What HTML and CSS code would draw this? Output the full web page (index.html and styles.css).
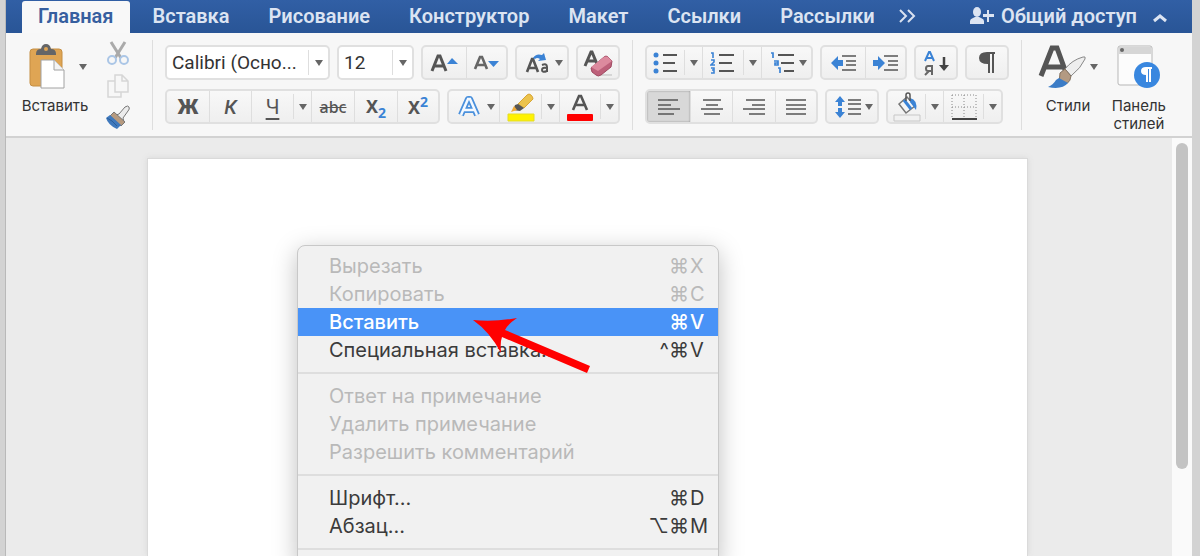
FILE: index.html
```html
<!DOCTYPE html>
<html lang="ru">
<head>
<meta charset="utf-8">
<title>Документ</title>
<link rel="stylesheet" href="styles.css">
</head>
<body>
<svg class="defs" aria-hidden="true">
  <symbol id="caret" viewBox="0 0 8 8"><path d="M0 1h8L4 7z" fill="#666"/></symbol>
</svg>
<div class="window">
  <nav class="tabs">
    <button class="tab active">Главная</button>
    <button class="tab">Вставка</button>
    <button class="tab">Рисование</button>
    <button class="tab">Конструктор</button>
    <button class="tab">Макет</button>
    <button class="tab">Ссылки</button>
    <button class="tab">Рассылки</button>
    <button class="more" aria-label="Ещё"><svg width="18" height="14" viewBox="0 0 18 14"><path d="M2 1l6 6-6 6M10 1l6 6-6 6" fill="none" stroke="#d9e1f0" stroke-width="2"/></svg></button>
    <button class="share"><svg width="26" height="20" viewBox="0 0 26 20" fill="#dce4f2"><ellipse cx="8" cy="6" rx="4" ry="5"/><path d="M1 18v-3q0-2 3-3l2-1h4l2 1q3 1 3 3v3zM18 4h2v4h5v3h-5v5h-2v-5h-4V8h4z"/></svg>Общий доступ</button>
    <button class="collapse" aria-label="Свернуть"><svg width="16" height="10" viewBox="0 0 16 10"><path d="M2 8l6-5 6 5" fill="none" stroke="#dce4f2" stroke-width="3"/></svg></button>
  </nav>

  <div class="ribbon">
    <section class="clipboard">
      <button class="big paste">
        <span class="art">
          <svg width="36" height="46" viewBox="0 0 36 46"><rect x="1" y="5" width="32" height="37" rx="3" fill="#dfa554" stroke="#c58e43"/><path d="M7 10q0-5 5-5 1-5 5-5t5 5q5 0 5 5v1H7z" fill="#646567"/><circle cx="17" cy="5" r="2" fill="#dfa554"/><path d="M12 16h13l10 10v18H12z" fill="#fff" stroke="#a2a2a2"/><path d="M25 16v10h10" fill="#f4f4f4" stroke="#a2a2a2"/></svg>
          <svg width="8" height="8"><use href="#caret"/></svg>
        </span>
        <span>Вставить</span>
      </button>
      <div class="clip-tools">
        <button aria-label="Вырезать"><svg width="24" height="26" viewBox="0 0 24 26" fill="none"><path d="M5 1l10 16M19 1L9 17" stroke="#aaa" stroke-width="3"/><circle cx="6" cy="19" r="4" stroke="#abc6e6" stroke-width="2"/><circle cx="18" cy="19" r="4" stroke="#abc6e6" stroke-width="2"/></svg></button>
        <button aria-label="Копировать"><svg width="24" height="26" viewBox="0 0 24 26" fill="#f7f7f7" stroke="#d6d6d6" stroke-width="1.5"><path d="M2 8h8l5 5v11H2z"/><path d="M9 2h7l6 6v11H9zM16 2v6h6"/></svg></button>
        <button aria-label="Формат по образцу"><svg width="26" height="26" viewBox="0 0 26 26"><path d="M14 10l6-7q3-2 4 0t-1 4l-5 7 1 4-8-7z" fill="#ececec" stroke="#777"/><path d="M9 8l11 10-4 4L5 12z" fill="#b69a7f" stroke="#777"/><path d="M5 11l11 10-4 4Q3 21 1 14z" fill="#3f79bd"/><path d="M2 14q5 2 10 8" fill="none" stroke="#2b5d99"/></svg></button>
      </div>
    </section>

    <section class="group">
      <div class="row">
        <div class="combo font-name"><select aria-label="Шрифт"><option>Calibri (Осно...</option></select><span class="drop"><svg width="8" height="8"><use href="#caret"/></svg></span></div>
        <div class="combo font-size"><select aria-label="Размер"><option>12</option></select><span class="drop"><svg width="8" height="8"><use href="#caret"/></svg></span></div>
        <div class="set">
          <button class="w43" aria-label="Увеличить шрифт"><svg width="32" height="24" viewBox="0 0 32 24"><path d="M3 20L9 5h2l6 15M5 15h10" fill="none" stroke="#555" stroke-width="3"/><path d="M18 13l5-6 6 6z" fill="#3b83d5"/></svg></button>
          <button class="w40" aria-label="Уменьшить шрифт"><svg width="32" height="24" viewBox="0 0 32 24"><path d="M4 18L9 6h2l5 12M6 14h8" fill="none" stroke="#666" stroke-width="2.6"/><path d="M17 10h11l-5.500 6z" fill="#3b83d5"/></svg></button>
        </div>
        <div class="set">
          <button class="w50 spread" aria-label="Регистр"><svg width="28" height="26" viewBox="0 0 28 26"><path d="M3 22L8 9h1l5 13M5 18h7" fill="none" stroke="#555" stroke-width="2.6"/><path d="M18 15q5-2 5 2v5M23 18q-5-1-5 2t5 1" fill="none" stroke="#555" stroke-width="2"/><path d="M9 8q3-5 9-3l2-2 2 7-8 1 2-2q-3-2-5 0z" fill="#3b83d5"/></svg><svg width="8" height="8"><use href="#caret"/></svg></button>
        </div>
        <div class="set">
          <button class="w40" aria-label="Очистить форматирование"><svg width="32" height="30" viewBox="0 0 32 30"><path d="M3 18L9 4h1l5 12M5 13h9" fill="none" stroke="#555" stroke-width="3"/><path d="M19 27h11" stroke="#bbb"/><path d="M9 20L22 9q2-2 4 0l4 4-1 6-10 8q-3 2-5 0l-4-3z" fill="#bd607a" stroke="#9f4860"/><path d="M9 19L22 9q2-1 4 0l4 4-14 10z" fill="#dc8a9e"/></svg></button>
        </div>
      </div>
      <div class="row">
        <div class="set letters">
          <button class="w42"><b>Ж</b></button>
          <button class="w42"><i>К</i></button>
          <button class="w42 part"><u>Ч</u></button>
          <button class="w18" aria-label="Подчёркивание"><svg width="8" height="8"><use href="#caret"/></svg></button>
          <button class="w43"><s>abc</s></button>
          <button class="w43 script"><span>X<sub>2</sub></span></button>
          <button class="w41 script"><span>X<sup>2</sup></span></button>
        </div>
        <div class="set">
          <button class="w50 spread" aria-label="Текстовые эффекты"><svg width="26" height="26" viewBox="0 0 26 26"><path d="M5 21L12 5h2l7 16M8 16h10" fill="none" stroke="#4a90dc" stroke-width="6" stroke-linejoin="round"/><path d="M5 21L12 5h2l7 16M8 16h10" fill="none" stroke="#f4f9ff" stroke-width="2.500"/></svg><svg width="8" height="8"><use href="#caret"/></svg></button>
          <button class="w42 part" aria-label="Цвет выделения"><svg width="28" height="30" viewBox="0 0 28 30"><path d="M11 12l9-9q2-2 4 0t2 4l-9 9z" fill="#ecc34c" stroke="#d7a535"/><path d="M11 12l6 4-4 3-7-1 2-5z" fill="#555"/><path d="M7 14l3 4-6 2z" fill="#efaa39"/><path d="M1 22h26v7H1z" fill="#fff200" stroke="#e3dc28"/></svg></button>
          <button class="w18" aria-label="Выбрать цвет выделения"><svg width="8" height="8"><use href="#caret"/></svg></button>
          <button class="w41 part" aria-label="Цвет текста"><svg width="28" height="30" viewBox="0 0 28 30"><path d="M7 18L13 4h2l6 14M9 13h10" fill="none" stroke="#555" stroke-width="2.6"/><rect x="1" y="22" width="26" height="7" rx="1" fill="#f00"/></svg></button>
          <button class="w18" aria-label="Выбрать цвет текста"><svg width="8" height="8"><use href="#caret"/></svg></button>
        </div>
      </div>
    </section>

    <section class="group">
      <div class="row">
        <div class="set">
          <button class="w37 part" aria-label="Маркеры"><svg width="26" height="22" viewBox="0 0 26 22"><g fill="#3b83d5"><circle cx="3" cy="3" r="2.500"/><circle cx="3" cy="11" r="2.500"/><circle cx="3" cy="19" r="2.500"/></g><path d="M10 3h14M10 11h12M10 19h14" stroke="#555" stroke-width="2"/></svg></button>
          <button class="w18" aria-label="Вид маркеров"><svg width="8" height="8"><use href="#caret"/></svg></button>
          <button class="w41 part" aria-label="Нумерация"><svg width="26" height="24" viewBox="0 0 26 24"><path d="M1 2h2v5M1 9h3v2L1 14h4M1 17h3v5H1M2 19h2" fill="none" stroke="#3b83d5" stroke-width="1.600"/><path d="M9 4h15M9 12h13M9 20h15" stroke="#555" stroke-width="2"/></svg></button>
          <button class="w18" aria-label="Вид нумерации"><svg width="8" height="8"><use href="#caret"/></svg></button>
          <button class="w50 spread" aria-label="Многоуровневый список"><svg width="26" height="24" viewBox="0 0 26 24"><path d="M2 2h2v5M5 10h4v4H6v-2h3M9 17h2v5" fill="none" stroke="#3b83d5" stroke-width="1.700"/><path d="M9 4h16M12 12h13M15 20h10" stroke="#555" stroke-width="2"/></svg><svg width="8" height="8"><use href="#caret"/></svg></button>
        </div>
        <div class="set">
          <button class="w43" aria-label="Уменьшить отступ"><svg width="28" height="18" viewBox="0 0 28 18"><path d="M1 9l7-7v4h5v6H8v4z" fill="#3b83d5"/><path d="M12 2h14M16 7h10M16 11h10M12 16h14" stroke="#555" stroke-width="1.600"/></svg></button>
          <button class="w40" aria-label="Увеличить отступ"><svg width="28" height="18" viewBox="0 0 28 18"><path d="M13 9L6 2v4H1v6h5v4z" fill="#3b83d5"/><path d="M12 2h14M16 7h10M16 11h10M12 16h14" stroke="#555" stroke-width="1.600"/></svg></button>
        </div>
        <div class="set">
          <button class="w40" aria-label="Сортировка"><svg width="26" height="26" viewBox="0 0 26 26" fill="none"><path d="M2 11L6 2h1l4 9M4 8h5" stroke="#3b83d5" stroke-width="2"/><path d="M9 25V16H5q-2 0-2 2.500T5 21h4M6 21l-4 4" stroke="#666" stroke-width="2"/><path d="M21 7v11" stroke="#444" stroke-width="2.500"/><path d="M16 15h10l-5 6z" fill="#444"/></svg></button>
        </div>
        <div class="set">
          <button class="w40" aria-label="Непечатаемые знаки"><svg width="18" height="22" viewBox="0 0 18 22" fill="#555"><path d="M17 0v2h-1v19h-2V2h-2v19h-2V12Q1 12 1 6t8-6z"/></svg></button>
        </div>
      </div>
      <div class="row">
        <div class="set">
          <button class="w43 pressed" aria-label="По левому краю"><svg width="24" height="18" viewBox="0 0 24 18"><path d="M1 2h20M1 7h13M1 11h22M1 16h16" stroke="#555" stroke-width="1.600"/></svg></button>
          <button class="w42" aria-label="По центру"><svg width="24" height="18" viewBox="0 0 24 18"><path d="M3 2h18M6 7h12M1 11h22M4 16h16" stroke="#555" stroke-width="1.600"/></svg></button>
          <button class="w43" aria-label="По правому краю"><svg width="24" height="18" viewBox="0 0 24 18"><path d="M4 2h19M10 7h13M1 11h22M7 16h16" stroke="#555" stroke-width="1.600"/></svg></button>
          <button class="w41" aria-label="По ширине"><svg width="24" height="18" viewBox="0 0 24 18"><path d="M2 2h20M2 7h20M2 11h20M2 16h20" stroke="#555" stroke-width="1.600"/></svg></button>
        </div>
        <div class="set">
          <button class="w50 spread" aria-label="Интервал"><svg width="28" height="22" viewBox="0 0 28 22"><path d="M6 0l5 6H8v4H4V6H1zM6 22l5-6H8v-4H4v4H1z" fill="#3b83d5"/><path d="M14 4h13M14 8h13M14 13h13M14 18h13" stroke="#555" stroke-width="1.600"/></svg><svg width="8" height="8"><use href="#caret"/></svg></button>
        </div>
        <div class="set">
          <button class="w37 part" aria-label="Заливка"><svg width="28" height="30" viewBox="0 0 28 30"><path d="M6 12l8-7 8 9-9 7z" fill="#f6f6f6" stroke="#777" stroke-width="1.500"/><path d="M11 8l7 9" stroke="#3b83d5" stroke-width="3"/><path d="M17 6q8 2 6 12l-3-4-3-4z" fill="#3b83d5"/><path d="M13 9V3q0-2 2-2t2 2v6" fill="none" stroke="#555" stroke-width="1.500"/><path d="M1 23h26v6H1z" fill="#f1f1f1" stroke="#c7c7c7"/></svg></button>
          <button class="w18" aria-label="Цвет заливки"><svg width="8" height="8"><use href="#caret"/></svg></button>
          <button class="w40 part" aria-label="Границы"><svg width="26" height="28" viewBox="0 0 26 28"><path d="M1 2h24M1 14h24M1 2v23M13 2v23M25 2v23" fill="none" stroke="#888" stroke-dasharray="1 2"/><path d="M1 26h25" stroke="#444" stroke-width="2"/></svg></button>
          <button class="w18" aria-label="Вид границ"><svg width="8" height="8"><use href="#caret"/></svg></button>
        </div>
      </div>
    </section>

    <section class="styles">
      <button class="big">
        <span class="art">
          <svg width="48" height="44" viewBox="0 0 48 44"><path d="M3 31L14 3h5l8 22M8 22h16" fill="none" stroke="#555" stroke-width="5"/><path d="M27 24Q34 15 45 12q3-1 2 2-4 9-14 17z" fill="#eee" stroke="#888"/><path d="M27 24l6 7q-1 10-12 8l1-11z" fill="#b39a82" stroke="#82715f"/><path d="M21 33l9 5q-6 7-20 4 5-2 8-7z" fill="#3c7cc6"/></svg>
          <svg width="8" height="8"><use href="#caret"/></svg>
        </span>
        <span>Стили</span>
      </button>
      <button class="big">
        <span class="art">
          <svg width="44" height="44" viewBox="0 0 44 44"><rect x="1" y="1" width="34" height="39" rx="2" fill="#fcfcfc" stroke="#b7b7b7"/><path d="M2 2h32v7H2z" fill="#d6d6d6"/><circle cx="5" cy="5" r="2" fill="#666"/><circle cx="30" cy="30" r="13" fill="#3987df"/><path d="M35 22v2h-1v13h-2V24h-1v13h-2v-7q-5 0-5-4t5-4z" fill="#fff"/></svg>
        </span>
        <span>Панель<br>стилей</span>
      </button>
    </section>
  </div>

  <main class="canvas">
    <div class="desk">
      <div class="page">
        <div class="menu" role="menu">
          <button class="item" disabled><span>Вырезать</span><kbd>⌘</kbd><kbd class="key">X</kbd></button>
          <button class="item" disabled><span>Копировать</span><kbd>⌘</kbd><kbd class="key">C</kbd></button>
          <button class="item chosen"><span>Вставить</span><kbd>⌘</kbd><kbd class="key">V</kbd></button>
          <button class="item"><span>Специальная вставка...</span><kbd>^⌘</kbd><kbd class="key">V</kbd></button>
          <hr>
          <button class="item" disabled><span>Ответ на примечание</span></button>
          <button class="item" disabled><span>Удалить примечание</span></button>
          <button class="item" disabled><span>Разрешить комментарий</span></button>
          <hr>
          <button class="item"><span>Шрифт...</span><kbd>⌘</kbd><kbd class="key">D</kbd></button>
          <button class="item"><span>Абзац...</span><kbd>⌥⌘</kbd><kbd class="key">M</kbd></button>
          <hr>
          <svg class="pointer" width="120" height="56" viewBox="0 0 120 56" aria-hidden="true"><path d="M1 3Q23 5 45 1 36 7 33 13L118 49l-3 7L30 20Q28 25 29 36 18 15 1 3z" fill="#f00"/></svg>
        </div>
      </div>
    </div>
    <div class="scroll"><div class="thumb"></div></div>
  </main>
</div>
</body>
</html>
```
FILE: styles.css
```css
* { box-sizing: border-box; }

body {
  margin: 0;
  padding: 0 8px 0 5px;
  height: 100vh;
  overflow: hidden;
  background: #d3d3d3;
  font-family: Inter, "Liberation Sans", sans-serif;
  color: #333;
}

button {
  margin: 0;
  padding: 0;
  border: 0;
  background: none;
  color: inherit;
  font: inherit;
}

.defs { display: none; }

.window {
  display: flex;
  flex-direction: column;
  height: 100%;
  border-left: 1px solid #b9b9b9;
  background: #f7f7f7;
}

.tabs {
  display: flex;
  flex: none;
  gap: 7px;
  height: 33px;
  padding: 1px 24px 0 16px;
  background: linear-gradient(#315fa5, #295596);
  font-family: Roboto, sans-serif;
  font-size: 20px;
  font-weight: 600;
  color: #dce4f2;
}

.tabs button { padding-bottom: 3px; }
.tabs .tab { padding: 0 16px 3px; border-radius: 3px 3px 0 0; }
.active { background: #f8f8f8; color: #365f9f; }
.share { display: flex; align-items: center; gap: 6px; margin-left: auto; }
.collapse { margin-left: 8px; }

.ribbon {
  display: flex;
  flex: none;
  height: 105px;
  padding-top: 7px;
  background: #f7f7f7;
  border-bottom: 2px solid #d2d2d2;
}

.clipboard, .group {
  height: 90px;
  border-right: 1px solid #dedede;
}

.clipboard { display: flex; width: 147px; }

.big {
  display: flex;
  flex-direction: column;
  align-items: center;
  gap: 7px;
  font-size: 15px;
  line-height: 18px;
}

.art { display: flex; align-items: center; gap: 4px; height: 50px; padding-top: 4px; }
.paste { width: 98px; }
.paste .art { padding-left: 6px; gap: 14px; }

.clip-tools {
  display: flex;
  flex-direction: column;
  justify-content: space-between;
  padding-top: 1px;
}

.clip-tools button { display: flex; width: 28px; justify-content: center; }

.group {
  display: flex;
  flex-direction: column;
  gap: 9px;
  padding: 5px 12px 0;
}

.row { display: flex; gap: 7px; height: 35px; }

.set, .combo {
  display: flex;
  overflow: hidden;
  border: 2px solid #e0e0e0;
  border-radius: 5px;
  background: linear-gradient(#f8f8f8, #efefef);
}

.combo { background: #fff; }
.font-name { width: 165px; }
.font-size { width: 77px; }

.combo select {
  flex: 1;
  min-width: 0;
  padding: 0 0 0 5px;
  border: 0;
  appearance: none;
  background: none;
  color: #333;
  font-family: Roboto, sans-serif;
  font-size: 19px;
}

.drop {
  display: flex;
  align-items: center;
  justify-content: center;
  width: 20px;
  margin: 3px 0;
  border-left: 1px solid #dedede;
}

.set button {
  display: flex;
  align-items: center;
  justify-content: center;
}

.set button + button { border-left: 1px solid #dedede; }
.set .part + button { height: 25px; margin: 3px 0; }
.set .spread { justify-content: space-between; padding: 0 4px 0 7px; }
.set .pressed { background: #d8d8d8; box-shadow: inset 0 0 2px #888; }

.w18 { width: 18px; }
.w37 { width: 37px; }
.w40 { width: 40px; }
.w41 { width: 41px; }
.w42 { width: 42px; }
.w43 { width: 43px; }
.w50 { width: 50px; }

.letters { font-family: Roboto, sans-serif; font-size: 20px; color: #555; }
.letters b { font-weight: 900; }
.letters i { font-weight: 500; }
.letters u { text-underline-offset: 4px; }
.letters s { font-family: "Noto Sans", sans-serif; font-size: 16px; font-weight: 500; }
.script { font-family: "Noto Sans", sans-serif; font-size: 18px; font-weight: 700; }
sub, sup { color: #3b83d5; font-size: 14px; line-height: 1; }

.styles {
  display: flex;
  flex: 1;
  justify-content: space-between;
  padding: 0 26px 0 16px;
}

.styles .big { height: 93px; }

.canvas { display: flex; flex: 1; min-height: 0; background: #ebebeb; }

.desk { flex: 1; padding: 20px 144px 0 141px; }

.page {
  position: relative;
  height: 100%;
  border: 1px solid #dadada;
  border-bottom: 0;
  background: #fff;
  box-shadow: 0 0 6px #d8d8d8;
}

.scroll { width: 20px; padding: 5px 4px 0; background: #fafafa; }
.thumb { height: 79%; border-radius: 6px; background: #c3c3c3; }

.menu {
  position: absolute;
  left: 149px;
  top: 86px;
  width: 422px;
  padding: 6px 0;
  border: 1px solid #c8c8c8;
  border-radius: 8px;
  background: #f1f1f1;
  box-shadow: 0 6px 24px rgba(0, 0, 0, 0.25);
  font-size: 20px;
  color: #3b3b3b;
}

.item {
  display: flex;
  align-items: center;
  width: 100%;
  height: 28px;
  padding: 0 10px 0 31px;
  text-align: left;
}

.item span { flex: 1; }
.item:disabled { color: #b9b9b9; }
.chosen { background: #4993f7; color: #fff; font-weight: 500; }

kbd { font: inherit; }
.key { width: 18px; margin-left: 1px; }

.menu hr { height: 2px; margin: 8px 0; border: 0; background: #dedede; }

.pointer { position: absolute; left: 174px; top: 71px; }
```
